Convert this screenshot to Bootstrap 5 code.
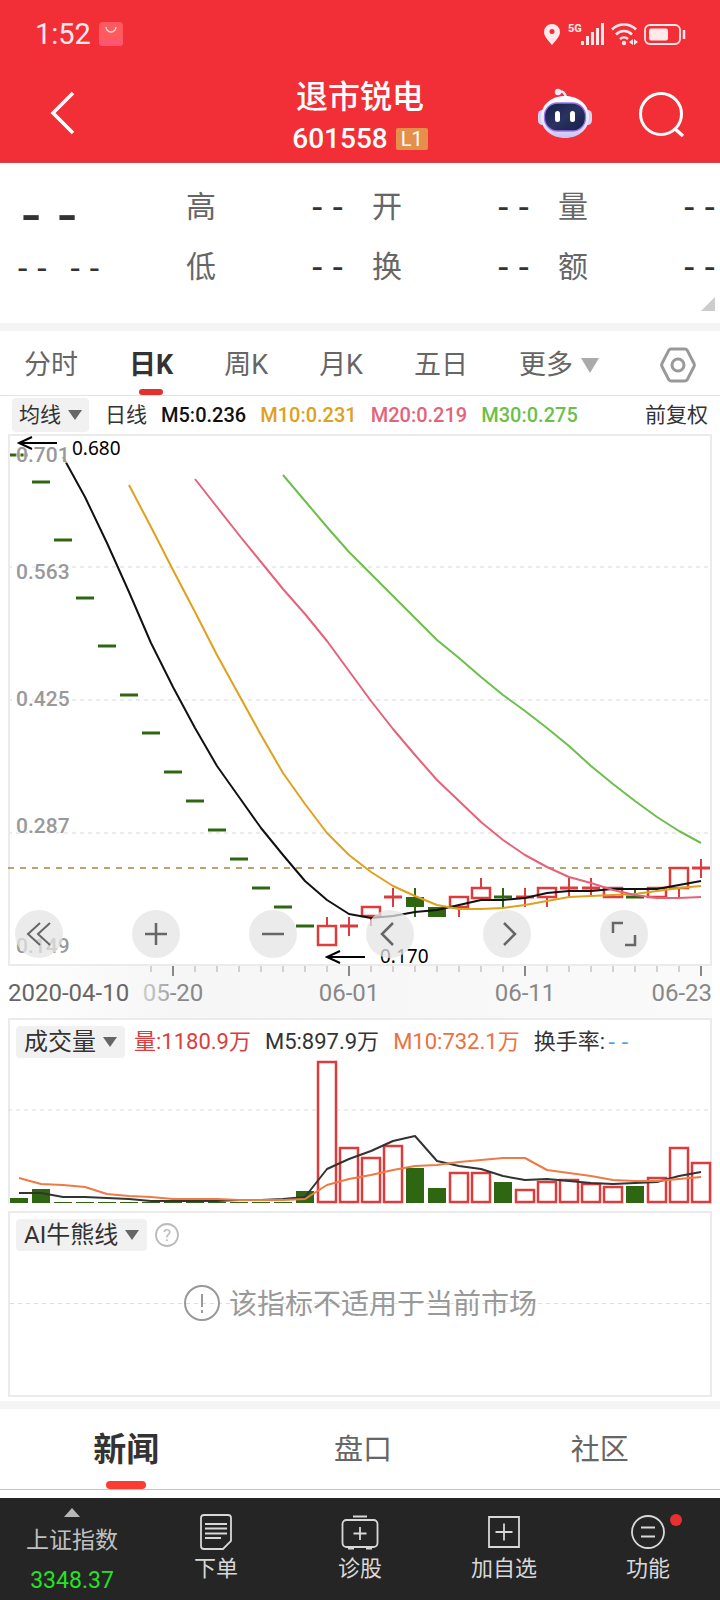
<!DOCTYPE html>
<html lang="zh-CN">
<head>
<meta charset="utf-8">
<meta name="viewport" content="width=device-width, initial-scale=1">
<title>退市锐电 601558</title>
<link href="https://cdn.jsdelivr.net/npm/bootstrap@5.3.0/dist/css/bootstrap.min.css" rel="stylesheet">
<style>
:root{--ui:Roboto,"Noto Sans CJK SC",sans-serif;--brand:#f22f37;--ink:#333;--soft:#666;--line:#ebebeb}
body{font-family:var(--ui);color:var(--ink);background:#fff;overflow-x:hidden}
svg{display:block;overflow:visible}
button,a{font-family:inherit}
.bare{border:0;background:none;padding:0;color:inherit}
.topbar{background:var(--brand);color:#fff;height:163px;border-bottom:1px solid #d8434a}
.status-row{height:68px;padding:0 34px 0 35px;color:#ffe9ea}
.clock{font-size:29px;line-height:34px}
.title-row{height:94px;padding:8px 36px 0}
.title-side{width:146px}
.back-side{padding:0 0 6px 14px}
.tools-side{padding-bottom:10px}
.stock-name{font-size:32px;line-height:40px;font-weight:500}
.stock-code{font-size:28px;line-height:44px;font-weight:500}
.level{background:#e68f4b;font-size:20px;line-height:22px;width:32px;border-radius:2px;text-align:center}
.quote{padding:13px 0 0 13px;height:160px}
.quote-main{width:173px}
.quote dl{display:grid;grid-template-columns:repeat(3,1fr);column-gap:24px;margin:0;align-content:start}
.quote dl div{height:60px}
.quote dt{font-size:30px;font-weight:400;color:var(--soft)}
.quote dd{margin:0}
.dashes{font-family:"DejaVu Sans Mono",monospace;font-size:34px;line-height:60px}
.dashes-sm{line-height:36px;font-size:32px;gap:14px}
.dashes-lg{font-family:"DejaVu Sans Mono",monospace;font-size:60px;line-height:74px}
.corner{right:5px;bottom:12px}
.strip{height:8px;background:#f4f4f4}
.period{height:65px;border-bottom:1px solid #e4e4e4;padding:0 24px;gap:51px}
.period button{font-size:27px;line-height:60px;padding-top:4px;color:var(--soft);position:relative}
.period .on,.news .on{color:var(--ink);font-weight:700}
.period .on::after{content:"";position:absolute;left:50%;bottom:0;width:24px;height:6px;margin-left:-12px;border-radius:3px;background:#e03030}
.legend-row{font-size:20px;line-height:36px;height:38px;padding:2px 12px}
.legend-items{gap:14px;padding-left:16px}
.pick{background:#f1f1f1;border:0;border-radius:4px;padding:0 7px;color:var(--ink);display:flex;align-items:center;gap:7px}
.cn21{font-size:21px}
.pick.cn21{line-height:34px}
.med{font-weight:500}
.panel{margin:0 8px;border:2px solid var(--line);position:relative}
.ai-panel{margin-top:7px}
.panel svg.chart,.axis svg{width:100%;height:auto}
.chart-tools{left:5px;right:62px;bottom:6px}
.round-btn{width:48px;height:48px;border-radius:50%;border:0;padding:0;background:rgba(228,228,228,.74);display:flex;align-items:center;justify-content:center}
.axis{margin:0 8px;background:linear-gradient(90deg,#fff 0,#fafafa 12%,#f6f6f6 24%,#fafafa 100%)}
.vol-row{height:40px;padding:6px 6px 2px;font-size:22px;line-height:34px}
.vol-items{gap:14px;padding-left:9px}
.rate-dashes{font-family:"DejaVu Sans Mono",monospace;color:#4aa5ea}
.pick-lg{height:32px;padding:0 8px;font-size:24px}
.notice{font-size:28px;line-height:42px;color:#999}
.ai-body{height:142px;padding-top:31px}
.ai-body::before{content:"";position:absolute;left:0;right:0;top:90px;height:1px;background:repeating-linear-gradient(90deg,#ddd 0 4px,transparent 4px 8px)}
.news{height:81px;border-bottom:1px solid #c4c4c4;padding:0 2px 0 8px}
.news button{font-size:29px;line-height:78px;padding-top:2px;color:var(--soft);position:relative;flex:1 1 0}
.news .on{font-size:33px}
.news .on::after{content:"";position:absolute;left:50%;bottom:0;width:40px;height:8px;margin-left:-20px;border-radius:4px;background:#fa3c32}
.dock{margin-top:8px;background:#252525;height:102px}
.dock a{flex:1 1 0;color:#d8d8d8;text-decoration:none;font-size:22px;line-height:26px;display:flex;flex-direction:column;align-items:center;padding-top:16px;gap:6px}
.dock .index-link{padding-top:10px;gap:8px;font-size:23px;line-height:32px;color:#c0c0c0}
.index-value{color:#22e422}
.dot{position:absolute;left:40px;top:0;width:12px;height:12px;border-radius:50%;background:#e93030}
</style>
<script src="https://cdn.jsdelivr.net/npm/bootstrap@5.3.0/dist/js/bootstrap.bundle.min.js"></script>
</head>
<body>
<header class="topbar">
  <div class="status-row d-flex align-items-center justify-content-between">
    <div class="d-flex align-items-center gap-2">
      <span class="clock">1:52</span>
      <svg width="24" height="24" viewBox="0 0 24 24"><rect width="24" height="24" rx="4" fill="#ff5a5f"/><path d="M0 18h24v2a4 4 0 0 1-4 4H4a4 4 0 0 1-4-4z" fill="#ff5570"/><path d="M7 5a5 5 0 0 0 10 0" fill="none" stroke="#ffe0dc" stroke-width="1.3"/></svg>
    </div>
    <svg width="144" height="26" viewBox="542 21 144 26" fill="none" stroke="#ffe9ea">
      <path d="M552 45c-4-5-8-8.500-8-13a8 8 0 0 1 16 0c0 4.500-4 8-8 13z" fill="#ffe9ea" stroke="none"/><circle cx="552" cy="31.500" r="2.500" fill="#f22f37" stroke="none"/>
      <text x="568" y="32" font-family="Roboto,sans-serif" font-size="11" font-weight="700" fill="#ffe9ea" stroke="none">5G</text>
      <path d="M582.500 45v-4M587.500 45v-9M592.500 45V32M597.500 45V28M602.500 45V23" stroke-width="3"/>
      <path d="M612 29.500a17 17 0 0 1 24 0M616 34.500a11 11 0 0 1 16 0M620 39a6 6 0 0 1 8 0" stroke-width="2.600"/><circle cx="624" cy="43" r="2.200" fill="#ffe9ea" stroke="none"/><path d="M629 42l4-3v6zM638 42l-4-3v6z" fill="#ffe9ea" stroke="none"/>
      <rect x="645" y="25" width="35" height="19" rx="5" stroke-width="1.800"/><rect x="649" y="28.500" width="19" height="12" rx="2" fill="#ffe9ea" stroke="none"/><path d="M684 30v9" stroke-width="2.500"/>
    </svg>
  </div>
  <div class="title-row d-flex align-items-center justify-content-between">
    <div class="title-side back-side"><button class="bare" aria-label="返回"><svg width="26" height="44" viewBox="0 0 26 44"><path d="M23 2 3 22l20 20" fill="none" stroke="#fff" stroke-width="3.500"/></svg></button></div>
    <div class="text-center">
      <h1 class="stock-name mb-0">退市锐电</h1>
      <div class="d-flex align-items-center justify-content-center gap-2"><span class="stock-code">601558</span><span class="level">L1</span></div>
    </div>
    <div class="title-side tools-side d-flex align-items-center justify-content-between">
      <button class="bare" aria-label="智能助手"><svg width="54" height="52" viewBox="0 0 54 52">
        <defs><linearGradient id="shell" x1="0" y1="0" x2="0" y2="1"><stop offset="0" stop-color="#fff"/><stop offset=".7" stop-color="#e5e2fb"/><stop offset="1" stop-color="#c7c3f3"/></linearGradient><linearGradient id="face" x1="0" y1="0" x2="1" y2="1"><stop offset="0" stop-color="#151d4a"/><stop offset=".5" stop-color="#2a3361"/><stop offset="1" stop-color="#151c48"/></linearGradient></defs>
        <path d="M20 4q7-2 8 6" fill="none" stroke="#ece9fb" stroke-width="2.500"/><circle cx="20" cy="4" r="3.200" fill="#ece9fb"/>
        <rect x="0" y="22" width="9" height="15" rx="4.500" fill="#d4d2f3"/><rect x="45" y="22" width="9" height="15" rx="4.500" fill="#d4d2f3"/>
        <path d="M27 8c14 0 24 9 24 21S41 50 27 50 3 41 3 29 13 8 27 8z" fill="url(#shell)"/>
        <rect x="6.500" y="15" width="41" height="28" rx="13" fill="url(#face)" stroke="#9a73ec" stroke-width="1.300"/>
        <rect x="17" y="23" width="5" height="11" rx="2.500" fill="#fff"/><rect x="32" y="23" width="5" height="11" rx="2.500" fill="#fff"/></svg></button>
      <button class="bare" aria-label="搜索"><svg width="46" height="46" viewBox="0 0 46 46" fill="none" stroke="#fff" stroke-width="3"><circle cx="23" cy="23" r="20.500"/><path d="m36 37 9 8" stroke-width="3.500"/></svg></button>
    </div>
  </div>
</header>

<main>
<section class="quote d-flex position-relative">
  <div class="quote-main">
    <div class="dashes-lg">--</div>
    <div class="d-flex dashes dashes-sm"><span>--</span><span>--</span></div>
  </div>
  <dl class="flex-grow-1">
    <div class="d-flex align-items-center justify-content-between"><dt>高</dt><dd class="dashes">--</dd></div>
    <div class="d-flex align-items-center justify-content-between"><dt>开</dt><dd class="dashes">--</dd></div>
    <div class="d-flex align-items-center justify-content-between"><dt>量</dt><dd class="dashes">--</dd></div>
    <div class="d-flex align-items-center justify-content-between"><dt>低</dt><dd class="dashes">--</dd></div>
    <div class="d-flex align-items-center justify-content-between"><dt>换</dt><dd class="dashes">--</dd></div>
    <div class="d-flex align-items-center justify-content-between"><dt>额</dt><dd class="dashes">--</dd></div>
  </dl>
  <svg class="corner position-absolute" width="14" height="14"><path d="M14 0v14H0z" fill="#ccc"/></svg>
</section>
<div class="strip"></div>
<nav class="period d-flex align-items-center">
  <button class="bare">分时</button><button class="bare on">日K</button><button class="bare">周K</button><button class="bare">月K</button><button class="bare">五日</button>
  <button class="bare d-flex align-items-center gap-2">更多<svg width="18" height="15"><path d="M0 0h18L9 15z" fill="#aaa"/></svg></button>
  <button class="bare ms-auto" aria-label="设置"><svg width="36" height="36" viewBox="0 0 36 36" fill="none" stroke="#999" stroke-width="3"><path d="M11 2h14q1.500 0 2.300 1.400L34 16.500q.8 1.500 0 3L27.300 32.600Q26.500 34 25 34H11q-1.500 0-2.300-1.400L2 19.500q-.8-1.500 0-3L8.700 3.400Q9.500 2 11 2z"/><circle cx="18" cy="18" r="6"/></svg></button>
</nav>

<div class="legend-row d-flex align-items-center">
  <button class="pick cn21">均线<svg width="14" height="10"><path d="M0 0h14L7 10z" fill="#666"/></svg></button>
  <div class="legend-items d-flex flex-grow-1 med">
    <span class="cn21 fw-normal">日线</span><span style="color:#111">M5:0.236</span><span style="color:#e0a020">M10:0.231</span><span style="color:#e5637a">M20:0.219</span><span style="color:#6cbf4a">M30:0.275</span>
  </div>
  <span class="cn21">前复权</span>
</div>

<section class="panel">
  <svg class="chart" id="price" viewBox="10 436 700 528"></svg>
  <div class="chart-tools position-absolute d-flex justify-content-between" id="tools">
    <button class="round-btn" aria-label="最早"><svg width="26" height="26" fill="none" stroke="#666" stroke-width="2"><path d="M14 2 2 13l12 11M24 2 12 13l12 11"/></svg></button>
    <button class="round-btn" aria-label="放大"><svg width="24" height="24" stroke="#666" stroke-width="2.500"><path d="M1 12h22M12 1v22"/></svg></button>
    <button class="round-btn" aria-label="缩小"><svg width="24" height="24" stroke="#666" stroke-width="2.500"><path d="M1 12h22"/></svg></button>
    <button class="round-btn" aria-label="向前"><svg width="24" height="26" fill="none" stroke="#666" stroke-width="2.500"><path d="M15 2 4 13l11 11"/></svg></button>
    <button class="round-btn" aria-label="向后"><svg width="24" height="26" fill="none" stroke="#666" stroke-width="2.500"><path d="m9 2 11 11L9 24"/></svg></button>
    <button class="round-btn" aria-label="全屏"><svg width="26" height="26" fill="none" stroke="#666" stroke-width="2.500"><path d="M2 12V2h10M24 14v10H14"/></svg></button>
  </div>
</section>
<div class="axis"><svg id="dates" viewBox="8 966 704 52"></svg></div>

<section class="panel border-bottom-0">
  <div class="vol-row d-flex align-items-center">
    <button class="pick pick-lg">成交量<svg width="14" height="10"><path d="M0 0h14L7 10z" fill="#666"/></svg></button>
    <div class="vol-items d-flex">
      <span style="color:#dc3c3c">量:1180.9万</span><span>M5:897.9万</span><span style="color:#ec7040">M10:732.1万</span><span>换手率:<span class="rate-dashes">--</span></span>
    </div>
  </div>
  <svg class="chart" id="volume" viewBox="10 1060 700 144"></svg>
</section>

<section class="panel ai-panel">
  <div class="vol-row d-flex align-items-center gap-2">
    <button class="pick pick-lg">AI牛熊线<svg width="14" height="10"><path d="M0 0h14L7 10z" fill="#666"/></svg></button>
    <button class="bare" aria-label="帮助"><svg width="24" height="24"><circle cx="12" cy="12" r="11" fill="none" stroke="#bbb" stroke-width="1.800"/><text x="12" y="18" text-anchor="middle" font-size="17" fill="#bbb">?</text></svg></button>
  </div>
  <div class="ai-body d-flex align-items-start justify-content-center gap-2">
    <svg width="38" height="38" class="position-relative"><circle cx="19" cy="19" r="17" fill="none" stroke="#999" stroke-width="2"/><path d="M19 10v13M19 26v3" stroke="#999" stroke-width="2"/></svg>
    <span class="notice position-relative">该指标不适用于当前市场</span>
  </div>
</section>
<div class="strip mt-1"></div>
<nav class="news d-flex"><button class="bare on">新闻</button><button class="bare">盘口</button><button class="bare">社区</button></nav>
</main>

<footer class="dock d-flex">
  <a href="#" class="index-link"><svg width="16" height="9"><path d="M8 0l8 9H0z" fill="#b8b8b8"/></svg><span>上证指数</span><span class="index-value">3348.37</span></a>
  <a href="#"><svg width="36" height="36" viewBox="0 0 36 36" fill="none" stroke="#d8d8d8" stroke-width="1.800"><path d="M6 1h24q3 0 3 3v23l-8 8H6q-3 0-3-3V4q0-3 3-3zM7 10h22M7 14.500h22M7 19.500h22M7 24h16"/></svg><span>下单</span></a>
  <a href="#"><svg width="38" height="36" viewBox="0 0 38 36" fill="none" stroke="#d8d8d8" stroke-width="1.800"><rect x="1.500" y="6" width="35" height="27" rx="4"/><path d="M12 2.500h14M19 13v13M12.500 19.500h13"/><path d="M7 34.500h6M25 34.500h6" stroke-width="2"/></svg><span>诊股</span></a>
  <a href="#"><svg width="36" height="36" viewBox="0 0 36 36" fill="none" stroke="#d8d8d8" stroke-width="1.800"><path d="M3 3h30v30H3zM18 9.500v17M9.500 18h17"/></svg><span>加自选</span></a>
  <a href="#"><span class="position-relative"><svg width="36" height="36" viewBox="0 0 36 36" fill="none" stroke="#d8d8d8" stroke-width="1.800"><circle cx="18" cy="18" r="16"/><path d="M11 13.500h14M11 22.500h14"/></svg><i class="dot"></i></span><span>功能</span></a>
</footer>

<script>
const RED='#dc3c3c', GREEN='#2f6612', STEP=22, X0=19;
const x=i=>X0+STEP*i;
const line=(start,ys,c,w=2)=>`<polyline fill="none" stroke="${c}" stroke-width="${w}" stroke-linejoin="round" points="${ys.map((y,k)=>x(start+k)+','+y).join(' ')}"/>`;
const seg=(x1,y1,x2,y2,c,w,d='')=>`<path d="M${x1} ${y1}L${x2} ${y2}" stroke="${c}" stroke-width="${w}" stroke-dasharray="${d}"/>`;
const label=(tx,y,t,fill,size,extra='')=>`<text x="${tx}" y="${y}" fill="${fill}" font-size="${size}" ${extra}>${t}</text>`;

/* [body top, body bottom, wick top, wick bottom, colour] */
const candles=[455,482,540,598,646,695,733,772,801,830,859,888,907,926].map(y=>[y,y,y,y,'g']).concat([
 [926,945,917,926,'r'],[926,926,917,936,'r'],[907,916,916,926,'r'],[897,897,888,907,'r'],[897,907,888,917,'g'],[907,917,907,917,'g'],
 [897,907,907,917,'r'],[888,898,878,888,'r'],[897,897,888,908,'g'],[897,897,888,907,'r'],[888,897,897,907,'r'],[888,888,878,897,'r'],
 [888,888,878,897,'r'],[888,897,888,888,'r'],[897,897,888,897,'g'],[888,897,888,888,'r'],[868,888,888,897,'r'],[868,868,859,878,'r']]);
let s='';
[567,700,833].forEach(y=>s+=seg(8,y,710,y,'#ececec',2,'4 4'));
s+=seg(8,868,710,868,'#b9a570',2,'6 6');
candles.forEach(([t,b,wt,wb,k],i)=>{
  const c=k==='r'?RED:GREEN, cx=x(i);
  if(wb>wt) s+=seg(cx,wt,cx,wb,c,2);
  if(t===b) s+=seg(cx-9,t,cx+9,t,c,3);
  else if(k==='g') s+=`<rect x="${cx-9}" y="${t}" width="18" height="${b-t}" fill="${c}"/>`;
  else s+=`<rect x="${cx-9}" y="${t}" width="18" height="${b-t}" fill="#fff" stroke="${c}" stroke-width="2.500"/>`;
});
s+=line(2,[457,497,543,592,643,687,728,766,797,828,855,881,900,914,918,916,912,910,905,900,900,898,893,891,891,889,889,889,885,881],'#111');
s+=line(5,[485,527,570,612,655,695,735,773,804,833,855,872,886,896,905,909,909,908,905,901,897,896,895,894,891,888,886],'#e0a01c');
s+=line(8,[479,507,535,562,589,614,641,671,701,729,755,780,801,822,840,855,867,877,883,890,895,898,898,897],'#e5637a');
s+=line(12,[475,501,527,552,574,596,618,640,658,677,695,711,728,746,766,784,801,817,831,843],'#6cbf4a');
[[462,'0.701'],[579,'0.563'],[706,'0.425'],[833,'0.287'],[953,'0.149']].forEach(([y,t])=>s+=label(16,y,t,'#999',21,'font-weight="500" stroke="#fff" stroke-opacity=".7" stroke-width="2" paint-order="stroke"'));
const arrow=(ax,y)=>`<path d="M${ax+38} ${y}H${ax}M${ax+13} ${y-6}L${ax} ${y}l13 6" fill="none" stroke="#000" stroke-width="2"/>`;
const plain='font-family="Noto Sans,sans-serif"';
s+=arrow(19,443)+label(72,455,'0.680','#000',19,plain)+arrow(327,957)+label(380,963,'0.170','#000',19,plain);
document.getElementById('price').innerHTML=s;

let a='<defs><linearGradient id="fade"><stop offset="0" stop-color="#ccc"/><stop offset=".4" stop-color="#aaa"/><stop offset=".5" stop-color="#888"/></linearGradient></defs>';
for(let i=6;i<32;i++){const major=(i-7)%8===0; a+=seg(x(i),966,x(i),major?976:972,major?'#888':'#aaa',major?2:1);}
a+=label(8,1001,'2020-04-10','#666',24);
a+=label(173,1001,'05-20','url(#fade)',24,'text-anchor="middle"')+label(349,1001,'06-01','#888',24,'text-anchor="middle"')+label(525,1001,'06-11','#888',24,'text-anchor="middle"')+label(712,1001,'06-23','#888',24,'text-anchor="end"');
document.getElementById('dates').innerHTML=a;

const vols=[1198,1189,...Array(11).fill(1202),1191,1062,1148,1158,1146,1168,1188,1173,1173,1182,1190,1182,1180,1184,1187,1186,1178,1148,1163];
let v=seg(8,1110,710,1110,'#ddd',1,'4 4');
vols.forEach((t,i)=>{
  const green=i<14||[18,19,22,28].includes(i);
  v+=green?`<rect x="${x(i)-9}" y="${t}" width="18" height="${1203-t}" fill="${GREEN}"/>`
          :`<rect x="${x(i)-9}" y="${t}" width="18" height="${1202-t}" fill="#fff" stroke="${RED}" stroke-width="2.500"/>`;
});
v+=line(0,[1193,1193,1197,1197,1198,1199,1201,1201,1201,1201,1200,1200,1199,1197,1169,1159,1151,1141,1136,1161,1166,1169,1176,1180,1179,1181,1183,1184,1183,1182,1176,1172],'#333');
v+=line(0,[1178,1184,1185,1187,1194,1196,1197,1199,1199,1199,1200,1200,1200,1199,1185,1179,1175,1170,1166,1165,1162,1160,1158,1158,1170,1173,1176,1180,1181,1181,1179,1177],'#ee7a45');
document.getElementById('volume').innerHTML=v;
</script>
</body>
</html>
